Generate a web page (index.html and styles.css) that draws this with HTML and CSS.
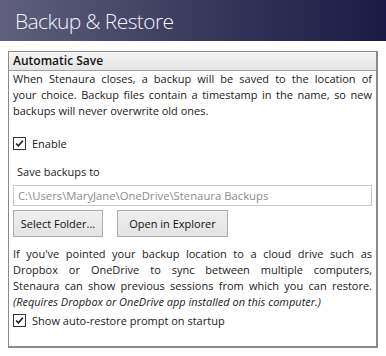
FILE: index.html
```html
<!DOCTYPE html>
<html>
<head>
<meta charset="utf-8">
<link rel="stylesheet" href="styles.css">
</head>
<body>
<header class="topbar"><h1 class="title">Backup &amp; Restore</h1></header>
<section class="group">
  <div class="group-head">Automatic Save</div>
  <div class="group-body">
    <p class="para">
      <span class="ln">When Stenaura closes, a backup will be saved to the location of</span>
      <span class="ln">your choice. Backup files contain a timestamp in the name, so new</span>
      <span class="ln last">backups will never overwrite old ones.</span>
    </p>
    <label class="check row-enable"><span class="box"><svg viewBox="0 0 13 13" width="13" height="13"><path d="M2.5 6.5 L5.2 9.2 L10.5 3.2" fill="none" stroke="#222" stroke-width="2"/></svg></span>Enable</label>
    <div class="label-save">Save backups to</div>
    <div class="path-input">C:\Users\MaryJane\OneDrive\Stenaura Backups</div>
    <div class="buttons">
      <button class="btn btn-select">Select Folder...</button>
      <button class="btn btn-open">Open in Explorer</button>
    </div>
    <p class="para para2">
      <span class="ln">If you've pointed your backup location to a cloud drive such as</span>
      <span class="ln">Dropbox or OneDrive to sync between multiple computers,</span>
      <span class="ln">Stenaura can show previous sessions from which you can restore.</span>
      <span class="ln last note">(Requires Dropbox or OneDrive app installed on this computer.)</span>
    </p>
    <label class="check row-restore"><span class="box"><svg viewBox="0 0 13 13" width="13" height="13"><path d="M2.5 6.5 L5.2 9.2 L10.5 3.2" fill="none" stroke="#222" stroke-width="2"/></svg></span>Show auto-restore prompt on startup</label>
  </div>
</section>
</body>
</html>
```
FILE: styles.css
```css
* { box-sizing: border-box; }
html, body { margin: 0; padding: 0; background: #fff; }
body {
  width: 386px;
  height: 356px;
  overflow: hidden;
  font-family: "Open Sans", "Noto Sans", sans-serif;
  font-size: 11px;
  color: #1a1a1a;
}
.topbar {
  height: 41px;
  background: linear-gradient(to right, #5f5f7d 0%, #3a3a5e 50%, #1a1a46 100%);
  padding-left: 15px;
  display: flex;
  align-items: center;
}
.title {
  margin: 0;
  font-family: "Open Sans", sans-serif;
  font-weight: 300;
  font-size: 21px;
  color: #f4f4f8;
  letter-spacing: -0.6px;
}
.group {
  margin: 10px 8px 0 8px;
  height: 297px;
  border: 2px solid #8a8a8a;
  border-top-width: 1px;
  border-left-width: 1px;
  display: flex;
  flex-direction: column;
}
.group-head {
  height: 19px;
  padding-left: 4px;
  background: linear-gradient(#f6f6f6, #e4e4e4);
  border-bottom: 1px solid #a0a0a0;
  font-weight: 600;
  font-size: 12px;
  line-height: 18px;
  color: #111;
}
.group-body {
  padding: 0 4px 0 4px;
}
.para {
  margin: 0;
  line-height: 16px;
}
.ln {
  display: block;
  text-align: justify;
  text-align-last: justify;
}
.ln.last { text-align-last: left; }
.note { font-style: italic; }
.check {
  display: flex;
  align-items: center;
  gap: 6px;
  height: 16px;
  font-size: 11px;
}
.box {
  width: 13px;
  height: 13px;
  border: 1px solid #333;
  background: #fff;
  display: flex;
  align-items: center;
  justify-content: center;
}
.box svg { display: block; width: 11px; height: 11px; }
.row-enable { margin-top: 16px; }
.label-save { margin-top: 13px; line-height: 16px; padding-left: 4px; }
.path-input {
  margin-top: 5px;
  height: 21px;
  border: 1px solid #c8c8c8;
  color: #8c8c8c;
  padding-left: 4px;
  line-height: 19px;
  font-size: 11.3px;
  white-space: nowrap;
}
.buttons {
  display: flex;
  gap: 14px;
  margin-top: 4px;
}
.btn {
  font-family: inherit;
  font-size: 11px;
  color: #111;
  height: 27px;
  padding: 0;
  white-space: nowrap;
  background: linear-gradient(#efefef, #e3e3e3);
  border: 1px solid #acacac;
  border-radius: 0;
}
.btn-select { width: 90px; }
.btn-open { width: 111px; }
.para2 { margin-top: 9px; }
.row-restore { margin-top: 2px; }
```
